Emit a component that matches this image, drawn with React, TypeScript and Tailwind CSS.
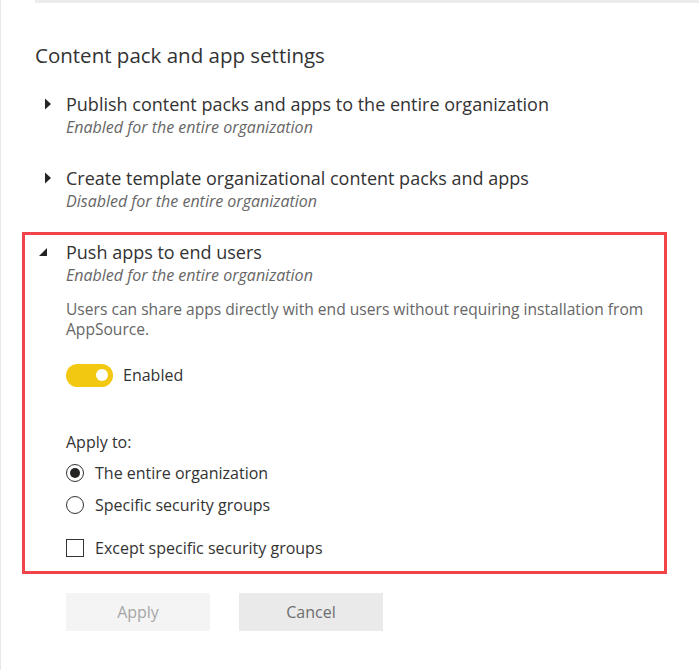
import { useState } from "react"

function Caret({ open }: { open?: boolean }) {
  if (open)
    return (
      <svg width="10" height="10" viewBox="0 0 10 10" className="shrink-0">
        <polygon points="9,1 9,9 1,9" fill="#252423" />
      </svg>
    )
  return (
    <svg width="8" height="12" viewBox="0 0 8 12" className="shrink-0">
      <polygon points="1,0.5 7,6 1,11.5" fill="#252423" />
    </svg>
  )
}

function Section({ title, status }: { title: string; status: string }) {
  return (
    <div className="flex">
      <div className="w-[31px] pl-[9px] pt-[6px]">
        <Caret />
      </div>
      <div>
        <div className="text-[18px] leading-[24px] text-[#333]">{title}</div>
        <div className="text-[16px] leading-[22px] italic text-[#666]">{status}</div>
      </div>
    </div>
  )
}

export default function App() {
  const [enabled, setEnabled] = useState(true)
  const [scope, setScope] = useState("org")
  const [except, setExcept] = useState(false)

  return (
    <div
      className="w-[699px] h-[670px] bg-white border-l border-[#e8e8e8] overflow-hidden"
      style={{ fontFamily: '"Open Sans", "Noto Sans", sans-serif' }}
    >
      <div className="ml-[34px] h-[3px] bg-[#ececec]" />

      <div className="pl-[34px] pt-[38px] text-[20.5px] leading-[28px] text-[#333]">
        Content pack and app settings
      </div>

      <div className="pl-[34px] pt-[23px] flex flex-col gap-[28px]">
        <Section
          title="Publish content packs and apps to the entire organization"
          status="Enabled for the entire organization"
        />
        <Section
          title="Create template organizational content packs and apps"
          status="Disabled for the entire organization"
        />
      </div>

      <div className="mt-[20px] ml-[21px] w-[645px] border-[3px] border-[#f1434a] pt-[5px] pb-[13px]">
        <div className="flex">
          <div className="w-[41px] pl-[13px] pt-[7px]">
            <Caret open />
          </div>
          <div className="flex-1">
            <div className="text-[18px] leading-[24px] text-[#333]">Push apps to end users</div>
            <div className="text-[16px] leading-[22px] italic text-[#666]">
              Enabled for the entire organization
            </div>
            <p className="mt-[13px] text-[15.6px] leading-[20px] text-[#666]">
              Users can share apps directly with end users without requiring installation from
              AppSource.
            </p>

            <button
              onClick={() => setEnabled(!enabled)}
              className="mt-[24px] flex items-center gap-[10px]"
            >
              <span
                className={
                  "w-[47px] h-[23px] rounded-full flex items-center px-[5px] " +
                  (enabled ? "bg-[#f2c811] justify-end" : "bg-[#c8c8c8] justify-start")
                }
              >
                <span className="w-[12px] h-[12px] rounded-full bg-white" />
              </span>
              <span className="text-[16px] text-[#333]">Enabled</span>
            </button>

            <div className="mt-[45px] text-[16px] leading-[20px] text-[#333]">Apply to:</div>

            <div className="mt-[11px] flex flex-col gap-[12px]">
              {[
                { id: "org", label: "The entire organization" },
                { id: "groups", label: "Specific security groups" },
              ].map((o) => (
                <button
                  key={o.id}
                  onClick={() => setScope(o.id)}
                  className="flex items-center gap-[11px] text-left"
                >
                  <span className="w-[18px] h-[18px] rounded-full border border-[#333] flex items-center justify-center">
                    {scope === o.id && <span className="w-[10px] h-[10px] rounded-full bg-[#252423]" />}
                  </span>
                  <span className="text-[16px] leading-[20px] text-[#333]">{o.label}</span>
                </button>
              ))}
            </div>

            <button
              onClick={() => setExcept(!except)}
              className="mt-[23px] flex items-center gap-[11px] text-left"
            >
              <span className="w-[18px] h-[18px] border border-[#333] flex items-center justify-center text-[12px]">
                {except ? "✓" : ""}
              </span>
              <span className="text-[16px] leading-[20px] text-[#333]">
                Except specific security groups
              </span>
            </button>
          </div>
        </div>
      </div>

      <div className="mt-[19px] ml-[65px] flex gap-[29px]">
        <button className="w-[144px] h-[38px] bg-[#f4f4f4] text-[16px] text-[#a6a6a6]">Apply</button>
        <button className="w-[144px] h-[38px] bg-[#eaeaea] text-[16px] text-[#6e6e6e]">Cancel</button>
      </div>
    </div>
  )
}
